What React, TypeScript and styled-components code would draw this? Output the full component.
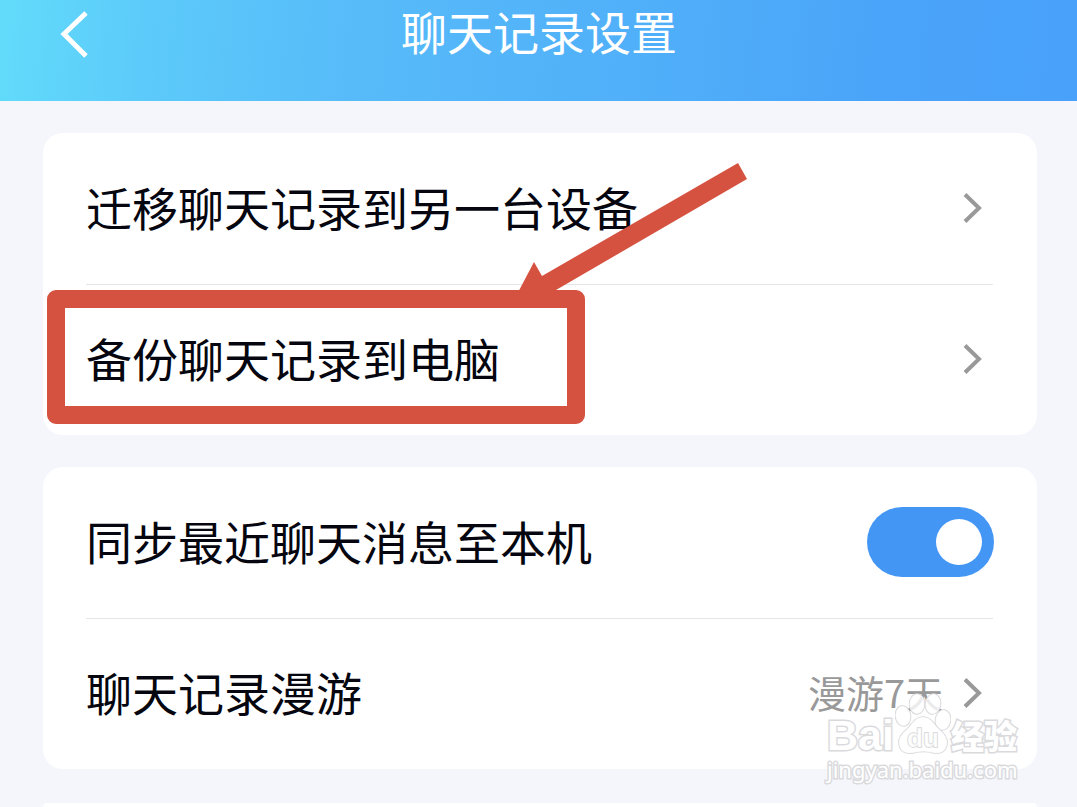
import React from "react";
import styled, { createGlobalStyle } from "styled-components";

const GlobalStyle = createGlobalStyle`
  *, *::before, *::after { box-sizing: border-box; }
  body {
    margin: 0;
    background: #f5f6fb;
    color: #05060f;
    font-family: "Noto Sans CJK SC", "Noto Sans", sans-serif;
  }
  button { font: inherit; color: inherit; }
`;

const Page = styled.div`
  min-height: 100vh;
  display: flex;
  flex-direction: column;
`;

const Header = styled.header`
  display: grid;
  grid-template-columns: 1fr auto 1fr;
  align-items: center;
  padding: 0 42px 33px 43px;
  color: #fff;
  background: linear-gradient(95deg, #62dbfa 0%, #5ccafa 14%, #57bbf9 33%, #50aff9 60%, #4aa4f9 82%, #49a1f9 100%);
`;

const BackButton = styled.button`
  justify-self: start;
  display: flex;
  padding: 8px 16px;
  border: 0;
  background: none;
`;

const Title = styled.h1`
  margin: 0;
  padding-bottom: 8px;
  font-size: 46px;
  font-weight: 400;
  line-height: 60px;
`;

const Main = styled.main`
  flex: 1;
  display: flex;
  flex-direction: column;
  gap: 32px;
  padding: 32px 40px 0 43px;
`;

const Card = styled.section`
  position: relative;
  padding: 0 44px 0 43px;
  border-radius: 20px;
  background: #fff;
`;

const NextCard = styled(Card)`
  flex: 1;
  margin-top: 2px;
  border-radius: 20px 20px 0 0;
`;

const rowLayout = `
  display: flex;
  align-items: center;
  justify-content: space-between;
  width: 100%;
  height: 151px;
  padding: 0 0 2px;
  border: 0;
  background: none;
  text-align: left;
  font-size: 46px;
  line-height: 68px;
`;

const LinkRow = styled.button<{ $divided?: boolean }>`
  ${rowLayout}
  ${(p) => p.$divided && "border-top: 1px solid #e4e5e8;"}
`;

const SwitchRow = styled.label`
  ${rowLayout}
`;

const RowLabel = styled.span`
  padding-bottom: 4px;
`;

const Trailing = styled.span`
  display: flex;
  align-items: center;
  gap: 20px;
  padding-right: 11px;
`;

const Value = styled.span`
  padding-bottom: 2px;
  color: #999;
  font-size: 38px;
  line-height: 56px;
`;

const Switch = styled.input`
  appearance: none;
  flex: none;
  display: flex;
  align-items: center;
  width: 127px;
  height: 70px;
  margin: 0 -1px 0 0;
  padding: 0 12px;
  border-radius: 35px;
  background: #c8cad0;
  &::before {
    content: "";
    width: 46px;
    height: 46px;
    border-radius: 50%;
    background: #fff;
  }
  &:checked {
    justify-content: flex-end;
    background: #4496f5;
  }
`;

const HighlightBox = styled.div`
  position: absolute;
  left: 4px;
  top: 157px;
  width: 538px;
  height: 134px;
  border: 18px solid #d65240;
  border-radius: 9px;
  pointer-events: none;
`;

const Arrow = styled.svg`
  position: absolute;
  left: 467px;
  top: 27px;
  pointer-events: none;
`;

const Watermark = styled.div`
  position: absolute;
  right: 16px;
  top: 226px;
  width: 196px;
  color: #fff;
  -webkit-text-stroke: 3px #dadadd;
  paint-order: stroke fill;
  pointer-events: none;
`;

const Brand = styled.div`
  display: flex;
  align-items: flex-end;
  height: 62px;
  padding-left: 2px;
`;

const BrandLatin = styled.span`
  width: 68px;
  font: 700 43px/40px "Liberation Sans", sans-serif;
`;

const BrandChinese = styled.span`
  font-size: 33px;
  font-weight: 900;
  line-height: 40px;
`;

const Site = styled.div`
  padding-left: 2px;
  font: 400 22px/28px "Noto Sans", sans-serif;
`;

const Chevron = () => (
  <svg width="19" height="32" viewBox="0 0 19 32" fill="none" stroke="#999" strokeWidth="4" aria-hidden="true">
    <path d="M2 2.5 16 16 2 29.5" />
  </svg>
);

const Paw = () => (
  <svg width="56" height="62" viewBox="0 0 56 62" fill="#fff" fillOpacity="0.8" stroke="#d6d6d9" strokeWidth="1.5" aria-hidden="true">
    <ellipse cx="8" cy="23" rx="7.5" ry="10" transform="rotate(-8 8 23)" />
    <ellipse cx="22" cy="11" rx="7.5" ry="10" />
    <ellipse cx="38" cy="11" rx="7.5" ry="10" transform="rotate(8 38 11)" />
    <ellipse cx="48" cy="27" rx="7.5" ry="10" transform="rotate(8 48 27)" />
    <path d="M28 24C35 24 38 29 42 34C47 39 53 43 52 51C51 59 45 61 39 60C32 58 25 58 18 60C11 61 5 59 4 51C3 43 9 39 14 34C18 29 21 24 28 24Z" />
    <text x="12" y="54" fontFamily="Liberation Sans, sans-serif" fontWeight="700" fontSize="26">du</text>
  </svg>
);

export default function App() {
  return (
    <Page>
      <GlobalStyle />
      <Header>
        <BackButton type="button" aria-label="返回">
          <svg width="32" height="50" viewBox="0 0 32 50" fill="none" stroke="#fff" strokeWidth="5" aria-hidden="true">
            <path d="M27 4 5 25 27 47" />
          </svg>
        </BackButton>
        <Title>聊天记录设置</Title>
      </Header>
      <Main>
        <Card>
          <LinkRow type="button">
            <RowLabel>迁移聊天记录到另一台设备</RowLabel>
            <Trailing><Chevron /></Trailing>
          </LinkRow>
          <LinkRow type="button" $divided>
            <RowLabel>备份聊天记录到电脑</RowLabel>
            <Trailing><Chevron /></Trailing>
          </LinkRow>
          <HighlightBox />
          <Arrow width="240" height="140" viewBox="510 160 240 140" fill="#d65240" aria-hidden="true">
            <path d="M738 163 747 179 556 290 550 300H514L534 262 542 276Z" />
          </Arrow>
        </Card>
        <Card>
          <SwitchRow>
            <RowLabel>同步最近聊天消息至本机</RowLabel>
            <Switch type="checkbox" role="switch" defaultChecked />
          </SwitchRow>
          <LinkRow type="button" $divided>
            <RowLabel>聊天记录漫游</RowLabel>
            <Trailing>
              <Value>漫游7天</Value>
              <Chevron />
            </Trailing>
          </LinkRow>
          <Watermark>
            <Brand>
              <BrandLatin>Bai</BrandLatin>
              <Paw />
              <BrandChinese>经验</BrandChinese>
            </Brand>
            <Site>jingyan.baidu.com</Site>
          </Watermark>
        </Card>
        <NextCard />
      </Main>
    </Page>
  );
}
